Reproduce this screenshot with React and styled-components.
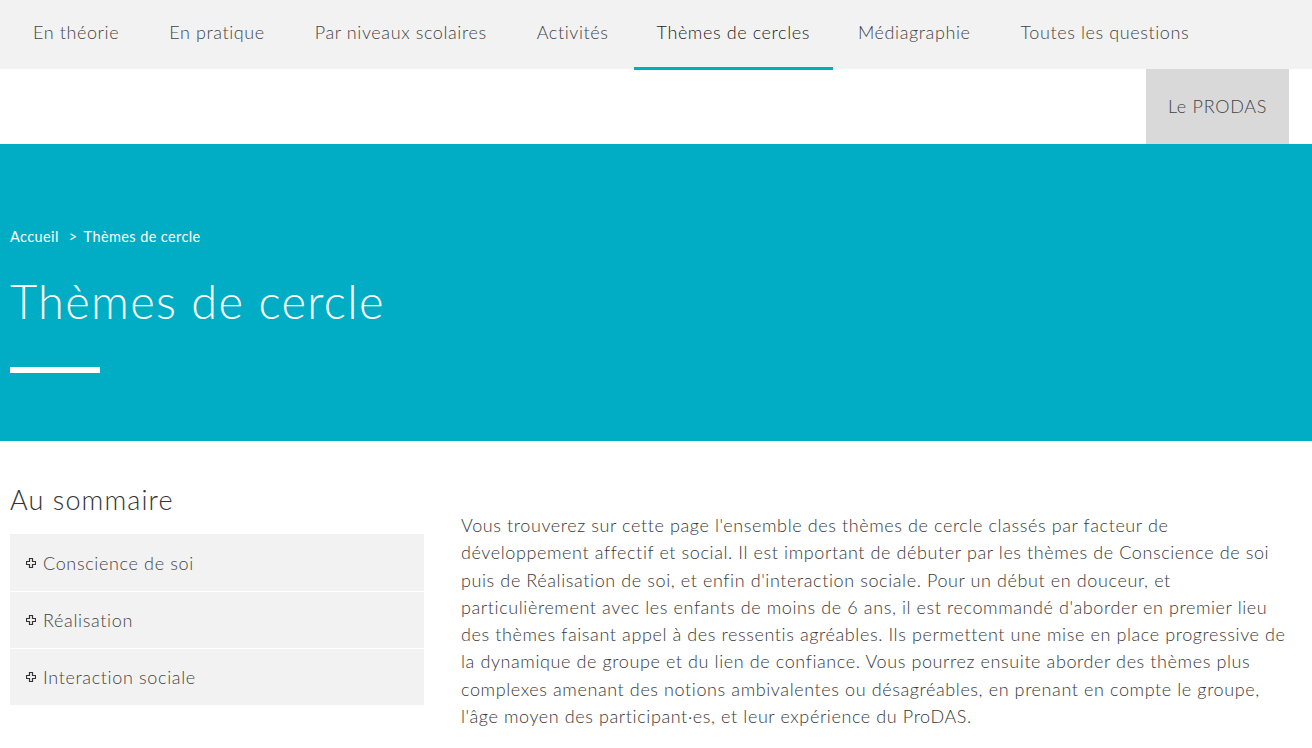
import React from "react";
import styled, { createGlobalStyle } from "styled-components";

const GlobalStyle = createGlobalStyle`
  html, body { margin: 0; padding: 0; background: #fff; }
  body { font-family: "Lato", "Open Sans", sans-serif; font-weight: 300; color: #444; }
  * { box-sizing: border-box; }
`;

const TEAL = "#00adc5";

const TopNav = styled.nav`
  display: flex;
  height: 69px;
  background: #f2f2f2;
  padding-left: 8px;
`;

const NavItem = styled.a`
  position: relative;
  display: flex;
  align-items: center;
  padding: 0 ${(p) => p.$pad || 25}px 5px;
  font-size: 18px;
  font-weight: 300;
  letter-spacing: 0.6px;
  color: ${(p) => (p.$active ? "#1e1e1e" : "#444")};
  text-decoration: none;
  white-space: nowrap;
  &::after {
    content: "";
    display: ${(p) => (p.$active ? "block" : "none")};
    position: absolute;
    left: 0;
    right: 0;
    bottom: -1px;
    height: 3px;
    background: ${TEAL};
  }
`;

const SubNav = styled.div`
  display: flex;
  justify-content: flex-end;
  height: 75px;
  padding-right: 23px;
`;

const ProdasButton = styled.a`
  display: flex;
  align-items: center;
  justify-content: center;
  width: 143px;
  background: #d9d9d9;
  color: #444;
  font-size: 18px;
  letter-spacing: 0.7px;
  text-decoration: none;
  padding-bottom: 1px;
`;

const Hero = styled.section`
  background: ${TEAL};
  height: 297px;
  padding: 84px 10px 0;
  color: #fff;
`;

const Breadcrumb = styled.div`
  display: flex;
  font-size: 14.5px;
  font-weight: 400;
  letter-spacing: 0.4px;
  line-height: 18px;
`;

const Crumb = styled.span`
  margin-right: ${(p) => p.$gap || 0}px;
`;

const Title = styled.h1`
  margin: 27px 0 0;
  font-size: 47px;
  font-weight: 300;
  letter-spacing: 1.3px;
  line-height: 56px;
`;

const TitleBar = styled.div`
  width: 90px;
  height: 6px;
  background: #fff;
  margin-top: 38px;
`;

const Content = styled.main`
  display: flex;
  padding: 0 10px;
`;

const Sidebar = styled.aside`
  width: 414px;
  flex-shrink: 0;
  padding-top: 43px;
`;

const SideTitle = styled.h2`
  margin: 0 0 18px;
  font-size: 27px;
  font-weight: 300;
  color: #333;
  line-height: 32px;
  letter-spacing: 1.1px;
`;

const Accordion = styled.ul`
  list-style: none;
  margin: 0;
  padding: 0;
`;

const AccordionItem = styled.li`
  display: flex;
  align-items: center;
  gap: 7px;
  height: 57px;
  padding-left: 16px;
  background: #f2f2f2;
  font-size: 18px;
  letter-spacing: 0.65px;
  color: #444;
  & + & {
    border-top: 1px solid #fff;
  }
`;

const Article = styled.article`
  margin-left: 37px;
  width: 832px;
  padding-top: 71px;
`;

const Paragraph = styled.p`
  margin: 0;
  font-size: 18px;
  line-height: 27.3px;
  letter-spacing: 0.6px;
  color: #383838;
  white-space: nowrap;
`;

const PlusIcon = () => (
  <svg width="10" height="10" viewBox="0 0 10 10" aria-hidden="true">
    <path
      d="M3.5 0.5h3v3h3v3h-3v3h-3v-3h-3v-3h3z"
      fill="none"
      stroke="#333"
      strokeWidth="1.2"
    />
  </svg>
);

const navItems = [
  "En théorie",
  "En pratique",
  "Par niveaux scolaires",
  "Activités",
  "Thèmes de cercles",
  "Médiagraphie",
  "Toutes les questions",
];

const sections = ["Conscience de soi", "Réalisation", "Interaction sociale"];

const introLines = [
  "Vous trouverez sur cette page l'ensemble des thèmes de cercle classés par facteur de",
  "développement affectif et social. Il est important de débuter par les thèmes de Conscience de soi",
  "puis de Réalisation de soi, et enfin d'interaction sociale. Pour un début en douceur, et",
  "particulièrement avec les enfants de moins de 6 ans, il est recommandé d'aborder en premier lieu",
  "des thèmes faisant appel à des ressentis agréables. Ils permettent une mise en place progressive de",
  "la dynamique de groupe et du lien de confiance. Vous pourrez ensuite aborder des thèmes plus",
  "complexes amenant des notions ambivalentes ou désagréables, en prenant en compte le groupe,",
  "l'âge moyen des participant·es, et leur expérience du ProDAS.",
];

export default function App() {
  return (
    <>
      <GlobalStyle />
      <header>
        <TopNav>
          {navItems.map((item) => (
            <NavItem
              key={item}
              href="#"
              $active={item === "Thèmes de cercles"}
              $pad={item === "Thèmes de cercles" ? 23 : 25}
            >
              {item}
            </NavItem>
          ))}
        </TopNav>
        <SubNav>
          <ProdasButton href="#">Le PRODAS</ProdasButton>
        </SubNav>
      </header>
      <Hero>
        <Breadcrumb>
          <Crumb $gap={10}>Accueil</Crumb>
          <Crumb $gap={6}>&gt;</Crumb>
          <Crumb>Thèmes de cercle</Crumb>
        </Breadcrumb>
        <Title>Thèmes de cercle</Title>
        <TitleBar />
      </Hero>
      <Content>
        <Sidebar>
          <SideTitle>Au sommaire</SideTitle>
          <Accordion>
            {sections.map((s) => (
              <AccordionItem key={s}>
                <PlusIcon />
                {s}
              </AccordionItem>
            ))}
          </Accordion>
        </Sidebar>
        <Article>
          <Paragraph>
            {introLines.map((line, i) => (
              <React.Fragment key={i}>
                {line}
                {i < introLines.length - 1 && <br />}
              </React.Fragment>
            ))}
          </Paragraph>
        </Article>
      </Content>
    </>
  );
}
